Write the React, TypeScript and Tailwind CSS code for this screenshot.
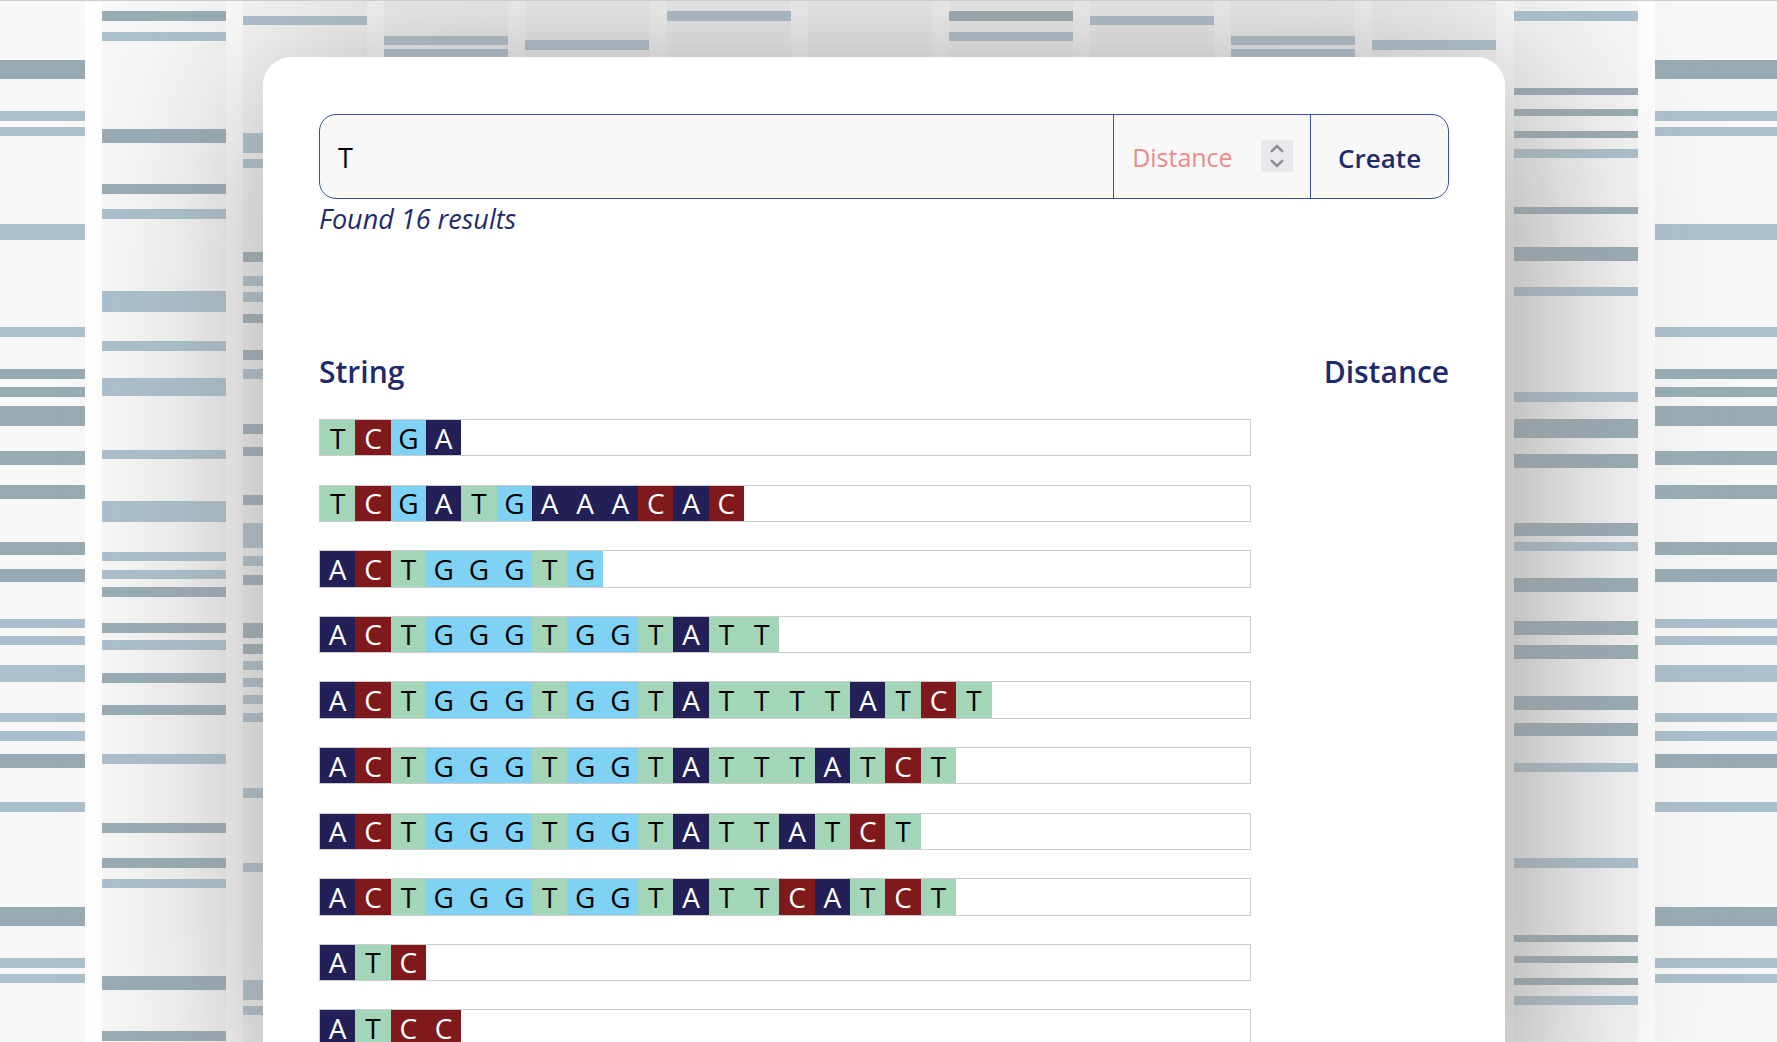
import { useState } from "react";

type Bar = [y: number, height: number, dark?: 1];

const COLUMNS: { x: number; bars: Bar[] }[] = [
  {
    x: 0,
    bars: [
      [60, 19, 1], [111, 10], [127, 9], [224, 16], [327, 10], [369, 10, 1], [387, 10, 1], [406, 20, 1],
      [451, 14, 1], [485, 14, 1], [542, 13, 1], [569, 13, 1], [619, 9], [636, 9], [665, 17], [713, 9],
      [731, 10], [754, 14, 1], [802, 10],
    ],
  },
  {
    x: 141,
    bars: [
      [11, 10, 1], [32, 9], [129, 14, 1], [184, 10, 1], [209, 10], [291, 21], [341, 10], [378, 18],
      [450, 9], [501, 21], [552, 9], [570, 9], [587, 10, 1], [623, 10, 1], [640, 10], [673, 10, 1],
      [705, 10, 1], [754, 10], [823, 10, 1],
    ],
  },
  {
    x: 282,
    bars: [
      [16, 9], [133, 20], [159, 9], [252, 10, 1], [276, 10], [292, 10], [314, 9, 1], [350, 10, 1],
      [369, 10], [424, 10, 1], [447, 9, 1], [495, 10, 1], [523, 25], [556, 10], [575, 10, 1],
      [623, 15, 1], [644, 10, 1], [661, 9], [678, 9], [695, 9], [713, 9], [788, 10],
    ],
  },
  { x: 423, bars: [[36, 9], [49, 14]] },
  { x: 564, bars: [[40, 10]] },
  { x: 706, bars: [[11, 10]] },
  { x: 847, bars: [] },
  { x: 988, bars: [[11, 10, 1], [32, 9]] },
  { x: 1129, bars: [[16, 9]] },
  { x: 1270, bars: [[36, 9], [49, 14]] },
  { x: 1411, bars: [[40, 10]] },
  {
    x: 1553,
    bars: [
      [11, 10], [88, 7, 1], [109, 7, 1], [131, 7, 1], [149, 9], [207, 7, 1], [247, 14, 1], [287, 9],
      [392, 10], [419, 19, 1], [454, 14, 1], [523, 13, 1], [542, 9], [578, 14, 1], [621, 14, 1],
      [645, 14, 1], [696, 14, 1], [723, 13, 1], [763, 9],
    ],
  },
];

const STRINGS = [
  "TCGA",
  "TCGATGAAACAC",
  "ACTGGGTG",
  "ACTGGGTGGTATT",
  "ACTGGGTGGTATTTTATCT",
  "ACTGGGTGGTATTTATCT",
  "ACTGGGTGGTATTATCT",
  "ACTGGGTGGTATTCATCT",
  "ATC",
  "ATCC",
];

const BASES: Record<string, string> = {
  A: "bg-[#232057] text-white",
  C: "bg-[#80191c] text-white",
  G: "bg-[#7fd2f3] text-black",
  T: "bg-[#a3d5b8] text-black",
};

function Backdrop() {
  return (
    <svg className="absolute inset-0 size-full" aria-hidden="true">
      <defs>
        <pattern id="gel" x="-39" y="-1" width="1694" height="847" patternUnits="userSpaceOnUse">
          <rect width="1694" height="847" fill="#ffffff" />
          {COLUMNS.map((column) => (
            <g key={column.x} transform={`translate(${column.x} 0)`}>
              <rect width="124" height="847" fill="#f8f8f8" />
              {column.bars.map(([y, height, dark]) => (
                <rect key={y} y={y} width="124" height={height} fill={dark ? "#98abb4" : "#abc0cd"} />
              ))}
            </g>
          ))}
        </pattern>
      </defs>
      <rect width="100%" height="100%" fill="url(#gel)" />
    </svg>
  );
}

function SearchForm() {
  const [text, setText] = useState("T");
  const [distance, setDistance] = useState("");
  const step = (by: number) => setDistance(String(Number(distance) + by));

  return (
    <form
      className="flex h-[85px] overflow-hidden rounded-[17px] border border-[#3a50a6] bg-[#f8f8f8]"
      onSubmit={(event) => event.preventDefault()}
    >
      <input
        type="text"
        aria-label="String"
        value={text}
        onChange={(event) => setText(event.target.value)}
        className="min-w-0 flex-1 px-[18px] pt-[3px] text-[27px] text-black outline-none"
      />
      <div className="flex w-[197px] items-center border-l border-[#3a50a6] pr-[17px] pl-[18px]">
        <input
          type="number"
          aria-label="Distance"
          placeholder="Distance"
          value={distance}
          onChange={(event) => setDistance(event.target.value)}
          className="h-full min-w-0 flex-1 appearance-none text-[25px] text-black outline-none [-moz-appearance:textfield] placeholder:text-[#ec8a8c] [&::-webkit-inner-spin-button]:appearance-none"
        />
        <div className="mb-[2px] flex h-8 w-8 flex-col bg-[#e9e9ed]">
          <button type="button" aria-label="Increase distance" onClick={() => step(1)} className="flex-1">
            <svg viewBox="0 0 32 16" className="block h-4 w-8" fill="none" stroke="#8f8f9d" strokeWidth="2.6" strokeLinecap="round" strokeLinejoin="round">
              <path d="M10.8 11.2 L16 6 L21.2 11.2" />
            </svg>
          </button>
          <button type="button" aria-label="Decrease distance" onClick={() => step(-1)} className="flex-1">
            <svg viewBox="0 0 32 16" className="block h-4 w-8" fill="none" stroke="#8f8f9d" strokeWidth="2.6" strokeLinecap="round" strokeLinejoin="round">
              <path d="M10.8 4.8 L16 10 L21.2 4.8" />
            </svg>
          </button>
        </div>
      </div>
      <button type="submit" className="w-[138px] border-l border-[#3a50a6] pt-[3px] text-[26px] font-semibold text-[#1f2a6b]">
        Create
      </button>
    </form>
  );
}

function Sequence({ value }: { value: string }) {
  return (
    <div className="mb-[3.03%] flex border border-[#cccccc]">
      {value.split("").map((base, index) => (
        <span key={index} className={`flex aspect-square w-[3.8%] items-center justify-center text-[28px] leading-none ${BASES[base]}`}>
          {base}
        </span>
      ))}
    </div>
  );
}

export default function App() {
  return (
    <div className="relative h-screen overflow-x-hidden overflow-y-auto border-t border-[#cccccc] font-['Open_Sans','Noto_Sans',sans-serif] [scrollbar-width:none]">
      <div className="relative">
        <Backdrop />
        <main className="relative pt-14 pr-[15.3%] pl-[14.8%]">
          <section className="rounded-t-[28px] bg-white p-14 pt-[57px] shadow-[14px_14px_200px_#969696]">
            <SearchForm />
            <p className="text-[27px] leading-10 text-[#1f2a6b] italic">Found 16 results</p>
            <table className="mt-[110px] w-full table-fixed">
              <thead>
                <tr className="text-[30px] leading-[46px] text-[#1f2a6b]">
                  <th className="w-[82.5%] pb-6 text-left font-semibold">String</th>
                  <th className="pb-6 text-right font-semibold">Distance</th>
                </tr>
              </thead>
              <tbody>
                {STRINGS.map((value) => (
                  <tr key={value}>
                    <td className="p-0 align-top">
                      <Sequence value={value} />
                    </td>
                    <td />
                  </tr>
                ))}
              </tbody>
            </table>
          </section>
        </main>
      </div>
    </div>
  );
}
